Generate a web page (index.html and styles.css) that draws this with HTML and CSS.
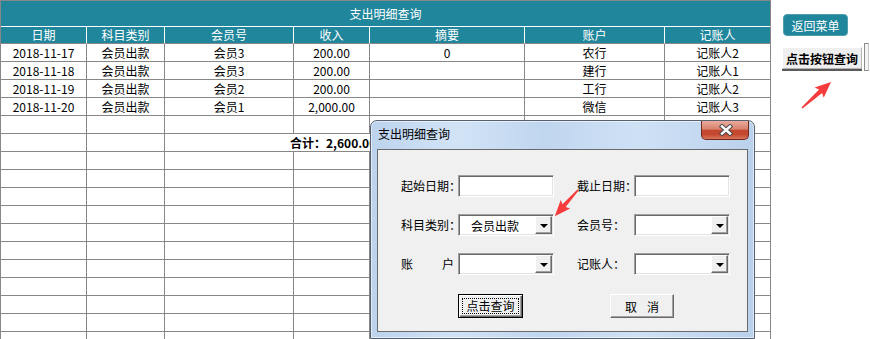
FILE: index.html
```html
<!DOCTYPE html>
<html>
<head>
    <meta charset="utf-8">
    <link rel="stylesheet" href="styles.css">
</head>
<body>
<div class="page">

    <!-- sheet -->
    <div class="sheet">
        <div class="title">支出明细查询</div>
        <div class="row head">
            <span>日期</span><span>科目类别</span><span>会员号</span><span>收入</span><span>摘要</span><span>账户</span><span>记账人</span>
        </div>
        <div class="row"><span>2018-11-17</span><span>会员出款</span><span>会员3</span><span>200.00</span><span>0</span><span>农行</span><span>记账人2</span></div>
        <div class="row"><span>2018-11-18</span><span>会员出款</span><span>会员3</span><span>200.00</span><span></span><span>建行</span><span>记账人1</span></div>
        <div class="row"><span>2018-11-19</span><span>会员出款</span><span>会员2</span><span>200.00</span><span></span><span>工行</span><span>记账人2</span></div>
        <div class="row"><span>2018-11-20</span><span>会员出款</span><span>会员1</span><span>2,000.00</span><span></span><span>微信</span><span>记账人3</span></div>
        <div class="row"><span></span><span></span><span></span><span></span><span></span><span></span><span></span></div>
        <div class="row"><span></span><span></span><span class="total">合计：2,600.00</span><span></span><span></span></div>
        <div class="row"><span></span><span></span><span></span><span></span><span></span><span></span><span></span></div>
        <div class="row"><span></span><span></span><span></span><span></span><span></span><span></span><span></span></div>
        <div class="row"><span></span><span></span><span></span><span></span><span></span><span></span><span></span></div>
        <div class="row"><span></span><span></span><span></span><span></span><span></span><span></span><span></span></div>
        <div class="row"><span></span><span></span><span></span><span></span><span></span><span></span><span></span></div>
        <div class="row"><span></span><span></span><span></span><span></span><span></span><span></span><span></span></div>
        <div class="row"><span></span><span></span><span></span><span></span><span></span><span></span><span></span></div>
        <div class="row"><span></span><span></span><span></span><span></span><span></span><span></span><span></span></div>
        <div class="row"><span></span><span></span><span></span><span></span><span></span><span></span><span></span></div>
        <div class="row"><span></span><span></span><span></span><span></span><span></span><span></span><span></span></div>
        <div class="row"><span></span><span></span><span></span><span></span><span></span><span></span><span></span></div>
    </div>

    <!-- buttons beside the sheet -->
    <div class="side">
        <button class="menu-btn">返回菜单</button>
        <div class="query-wrap">
            <button class="query-btn">点击按钮查询</button>
            <span class="edge"></span>
        </div>
    </div>

    <!-- query window -->
    <div class="dialog">
        <div class="caption">支出明细查询</div>
        <div class="close">
            <svg width="14" height="12" viewBox="0 0 14 12">
                <path d="M3 2.5 L11 9.5 M11 2.5 L3 9.5" stroke="#4a4a4a" stroke-width="4.4" stroke-linecap="square" fill="none"/>
                <path d="M3 2.5 L11 9.5 M11 2.5 L3 9.5" stroke="#fff" stroke-width="2.4" stroke-linecap="square" fill="none"/>
            </svg>
        </div>
        <div class="client">
            <div class="form">
                <label>起始日期：</label><div class="field"></div>
                <label>截止日期：</label><div class="field"></div>

                <label>科目类别：</label>
                <div class="field combo"><span class="value">会员出款</span><i class="drop"></i></div>
                <label>会员号：</label>
                <div class="field combo"><span class="value"></span><i class="drop"></i></div>

                <label class="spread"><span>账</span><span>户</span></label>
                <div class="field combo"><span class="value"></span><i class="drop"></i></div>
                <label>记账人：</label>
                <div class="field combo"><span class="value"></span><i class="drop"></i></div>
            </div>
            <div class="actions">
                <button class="btn default"><span class="focus">点击查询</span></button>
                <button class="btn cancel">取消</button>
            </div>
        </div>
    </div>

    <!-- red pointer arrows -->
    <svg class="marks" width="870" height="339" viewBox="0 0 870 339">
        <g transform="translate(802 108) rotate(-41.9)">
            <polygon points="0,-0.8 25,-2.3 23,-6.8 39,0 23,6.8 25,2.3 0,0.8" fill="#f53b3b"/>
        </g>
        <g transform="translate(578 190) rotate(131.5)">
            <polygon points="0,-0.8 21,-2.1 19,-6.3 35,0 19,6.3 21,2.1 0,0.8" fill="#f53b3b"/>
        </g>
    </svg>
</div>
</body>
</html>
```

FILE: styles.css
```css
* {
    box-sizing: border-box;
}

html,
body {
    margin: 0;
    height: 339px;
    overflow: hidden;
    background: #fff;
}

body {
    font-family: "Noto Sans CJK SC", "Microsoft YaHei", sans-serif;
    font-size: 12px;
    color: #000;
}

button {
    font-family: inherit;
    font-size: 12px;
    padding: 0;
    margin: 0;
    cursor: pointer;
}

.page {
    position: relative;
    display: flex;
    height: 339px;
}

/* sheet */

.sheet {
    flex: none;
    width: 771px;
    border-left: 1px solid #878787;
    border-top: 1px solid #878787;
}

.title {
    height: 26px;
    line-height: 25px;
    background: #1f869c;
    color: #fff;
    text-align: center;
    border-bottom: 1px solid #fff;
    border-right: 1px solid #878787;
}

.row {
    display: grid;
    grid-template-columns: 86px 78px 129px 76px 155px 140px 106px;
}

.row span {
    height: 18px;
    line-height: 17px;
    text-align: center;
    white-space: nowrap;
    border-right: 1px solid #878787;
    border-bottom: 1px solid #878787;
}

.row.head span {
    height: 17px;
    line-height: 16px;
    background: #1f869c;
    color: #fff;
    border-right-color: #fff;
}

.row.head span:last-child {
    border-right-color: #878787;
}

.row .total {
    grid-column: 3 / 6;
    text-align: left;
    padding-left: 125px;
    font-weight: bold;
}

/* side buttons */

.side {
    display: flex;
    flex-direction: column;
    align-items: flex-start;
    padding-top: 14px;
}

.menu-btn {
    margin-left: 12px;
    width: 65px;
    height: 22px;
    border: 1px solid #4f9fb1;
    border-radius: 4px;
    background: #1f869c;
    color: #fff;
}

.query-wrap {
    display: flex;
    align-items: flex-start;
    margin-top: 7px;
    margin-left: 11px;
}

.query-btn {
    margin-top: 4px;
    width: 80px;
    height: 22px;
    background: #efefef;
    border: 1px solid;
    border-color: #fff #b4b4b4 #b4b4b4 #fff;
    box-shadow: 0 2px 0 #5a5a5a;
    font-weight: bold;
    color: #000;
}

.edge {
    margin-left: 2px;
    width: 5px;
    height: 28px;
    background: #f4f4f4;
    border: 1px solid #8c8c8c;
    border-right-color: #c8c8c8;
}

/* dialog */

.dialog {
    position: absolute;
    left: 370px;
    top: 120px;
    width: 385px;
    height: 219px;
    padding: 0 6px 6px 6px;
    border: 1px solid #56606e;
    border-radius: 7px 7px 0 0;
    background: linear-gradient(to right, #bcd3ee 0%, #d2e3f6 22%, #c0d6ef 45%, #cfe1f5 70%, #bad1ec 100%);
    box-shadow: inset 0 0 0 1px rgba(255, 255, 255, 0.55);
}

.caption {
    height: 28px;
    line-height: 25px;
    padding-left: 1px;
    color: #000;
}

.close {
    position: absolute;
    top: 0;
    right: 5px;
    width: 48px;
    height: 19px;
    display: flex;
    align-items: center;
    justify-content: center;
    padding-left: 2px;
    border: 1px solid #6e2a1c;
    border-top: none;
    border-radius: 0 0 5px 5px;
    background: linear-gradient(#e8ab9d 0%, #d9826d 45%, #c4472f 52%, #c34a31 75%, #d8755a 100%);
}

.client {
    height: 183px;
    border: 1px solid #6a6a6a;
    background: #f0f0f0;
}

.form {
    display: grid;
    grid-template-columns: 57px 119px 57px 96px;
    grid-auto-rows: 22px;
    row-gap: 17px;
    padding: 25px 0 0 23px;
}

.form label {
    line-height: 22px;
    white-space: nowrap;
}

.form label.spread {
    display: flex;
    justify-content: space-between;
    width: 53px;
}

.field {
    width: 96px;
    height: 22px;
    background: #fff;
    border: 1px solid;
    border-color: #a0a0a0 #fff #fff #a0a0a0;
    box-shadow: inset 1px 1px #696969, inset -1px -1px #e3e3e3;
}

.combo {
    display: flex;
    padding: 1px;
}

.combo .value {
    flex: 1;
    line-height: 19px;
    padding-left: 11px;
}

.drop {
    position: relative;
    width: 17px;
    background: #f0f0f0;
    border: 1px solid;
    border-color: #fff #696969 #696969 #fff;
    box-shadow: inset -1px -1px #a0a0a0;
}

.drop::after {
    content: "";
    position: absolute;
    left: 4px;
    top: 7px;
    border-left: 4px solid transparent;
    border-right: 4px solid transparent;
    border-top: 4px solid #000;
}

.actions {
    display: flex;
    gap: 87px;
    margin-top: 19px;
    padding-left: 80px;
}

.btn {
    height: 24px;
    background: #f0f0f0;
    color: #000;
    border: 1px solid;
    border-color: #fff #696969 #696969 #fff;
    box-shadow: inset -1px -1px #a0a0a0;
}

.btn.default {
    width: 65px;
    padding: 3px;
    border: 1px solid #000;
    box-shadow: inset 1px 1px #fff, inset -1px -1px #696969, inset -2px -2px #a0a0a0;
}

.btn .focus {
    display: block;
    height: 100%;
    line-height: 14px;
    border: 1px dotted #000;
}

.btn.cancel {
    width: 64px;
    letter-spacing: 10px;
    padding-left: 10px;
}

.marks {
    position: absolute;
    left: 0;
    top: 0;
    pointer-events: none;
}
```
